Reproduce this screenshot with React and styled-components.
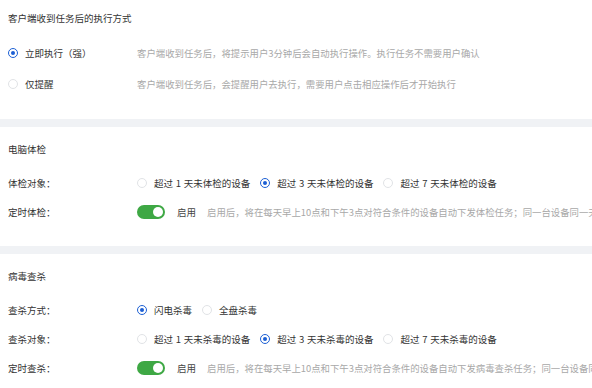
import React from 'react';
import styled, { createGlobalStyle } from 'styled-components';

const GlobalStyle = createGlobalStyle`
	html, body {
		margin: 0;
		padding: 0;
		background: #fff;
		overflow: hidden;
	}
	body {
		font-family: "Noto Sans CJK SC", "Noto Sans", sans-serif;
		color: #333;
	}
`;

const Page = styled('div')`
	width: 592px;
	overflow: hidden;
	white-space: nowrap;
`;

const Section = styled('section')`
	padding: ${({ $first }) => ($first ? '9px' : '13px')} 0 20px 8px;
`;

const Divider = styled('div')`
	height: 8px;
	background: #f0f2f5;
`;

const Title = styled('h3')`
	margin: 0 0 10px;
	height: 18px;
	line-height: 18px;
	font-size: 9.5px;
	font-weight: normal;
	color: #333;
`;

const Row = styled('div')`
	display: grid;
	grid-template-columns: 129px 1fr;
	align-items: center;
	height: ${({ $tall }) => ($tall ? '31px' : '29px')};
`;

const Label = styled('div')`
	font-size: 9.5px;
	color: #333;
`;

const Value = styled('div')`
	display: flex;
	align-items: center;
	font-size: 9.5px;
`;

const Desc = styled('span')`
	font-size: 9.4px;
	color: #a8a8a8;
`;

const RadioItem = styled('label')`
	display: inline-flex;
	align-items: center;
	gap: 7px;
	margin-right: 10px;
	font-size: 9.5px;
	color: #333;
	word-spacing: 0.6px;
`;

const Circle = styled('span')`
	box-sizing: border-box;
	width: 10px;
	height: 10px;
	border-radius: 50%;
	border: 1px solid ${({ $on }) => ($on ? '#1c5fd4' : '#e1e3e6')};
	display: flex;
	align-items: center;
	justify-content: center;

	&::after {
		content: '';
		width: 4px;
		height: 4px;
		border-radius: 50%;
		background: ${({ $on }) => ($on ? '#1c5fd4' : 'transparent')};
	}
`;

const Switch = styled('span')`
	position: relative;
	width: 28px;
	height: 14px;
	border-radius: 7px;
	background: ${({ $on }) => ($on ? '#3ea844' : '#ccc')};
	margin-right: 12px;

	&::after {
		content: '';
		position: absolute;
		top: 2px;
		left: ${({ $on }) => ($on ? '16px' : '2px')};
		width: 10px;
		height: 10px;
		border-radius: 50%;
		background: #fff;
	}
`;

const SwitchText = styled('span')`
	font-size: 9.5px;
	color: #444;
	margin-right: 11px;
`;

const Radio = ({ on, children }) => (
	<RadioItem>
		<Circle $on={on} />
		{children}
	</RadioItem>
);

const Options = ({ items, value }) => (
	<Value>
		{items.map((t, i) => (
			<Radio key={t} on={i === value}>{t}</Radio>
		))}
	</Value>
);

const Timer = ({ text }) => (
	<Value>
		<Switch $on />
		<SwitchText>启用</SwitchText>
		<Desc>{text}</Desc>
	</Value>
);

const App = () => (
	<Page>
		<GlobalStyle />
		<Section $first>
			<Title>客户端收到任务后的执行方式</Title>
			<Row $tall>
				<Radio on>立即执行（强）</Radio>
				<Desc>客户端收到任务后，将提示用户3分钟后会自动执行操作。执行任务不需要用户确认</Desc>
			</Row>
			<Row $tall>
				<Radio>仅提醒</Radio>
				<Desc>客户端收到任务后，会提醒用户去执行，需要用户点击相应操作后才开始执行</Desc>
			</Row>
		</Section>
		<Divider />
		<Section>
			<Title>电脑体检</Title>
			<Row>
				<Label>体检对象：</Label>
				<Options value={1} items={['超过 1 天未体检的设备', '超过 3 天未体检的设备', '超过 7 天未体检的设备']} />
			</Row>
			<Row>
				<Label>定时体检：</Label>
				<Timer text="启用后，将在每天早上10点和下午3点对符合条件的设备自动下发体检任务；同一台设备同一天" />
			</Row>
		</Section>
		<Divider />
		<Section>
			<Title>病毒查杀</Title>
			<Row>
				<Label>查杀方式：</Label>
				<Options value={0} items={['闪电杀毒', '全盘杀毒']} />
			</Row>
			<Row>
				<Label>查杀对象：</Label>
				<Options value={1} items={['超过 1 天未杀毒的设备', '超过 3 天未杀毒的设备', '超过 7 天未杀毒的设备']} />
			</Row>
			<Row>
				<Label>定时查杀：</Label>
				<Timer text="启用后，将在每天早上10点和下午3点对符合条件的设备自动下发病毒查杀任务；同一台设备同" />
			</Row>
		</Section>
	</Page>
);

export default App;
